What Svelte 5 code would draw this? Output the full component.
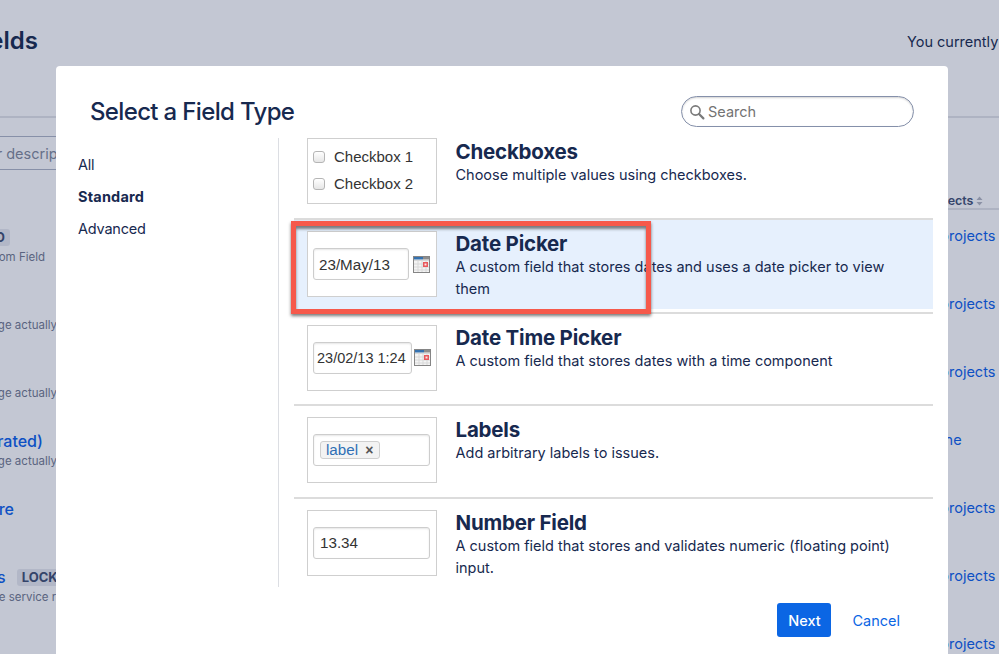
<script lang="ts">
  const LEFT_ROWS = [
    { cls: 'r0', title: '', tag: 'LOCKED', desc: 'Default Custom Field' },
    { cls: 'r1', title: '', tag: '', desc: 'This page actually' },
    { cls: 'r2', title: '', tag: '', desc: 'This page actually' },
    { cls: 'r3', title: 'Epic (migrated)', tag: '', desc: 'This page actually' },
    { cls: 'r4', title: 'Store', tag: '', desc: '' },
    { cls: 'r5', title: 'Participants', tag: 'LOCKED', desc: 'Used by the service request' },
  ];
  const RIGHT_ROWS = ['All projects', 'All projects', 'All projects', 'None', 'All projects', 'All projects', 'All projects'];
</script>

{#snippet calendar()}
  <svg class="cal" width="17" height="17" viewBox="0 0 17 17" aria-hidden="true">
    <rect x="0.5" y="0.5" width="16" height="16" fill="#f4f4f4" stroke="#858585" />
    <rect x="1" y="1" width="9" height="2.5" fill="#3572b0" />
    <rect x="10" y="1" width="6" height="2.5" fill="#8d8d8d" />
    <path d="M1 4.5h15M1 8h15M1 11h15M1 14h15M5 4v12M9 4v12M13 4v12" stroke="#d8d8d8" stroke-width="1" fill="none" />
    <rect x="10" y="6" width="5" height="5" fill="#e8585c" />
    <rect x="11.5" y="7.5" width="2" height="2" fill="#fbe4e4" />
  </svg>
{/snippet}

<div class="page">
  <div class="strip left">
    <div class="head"><h1>Custom fields</h1></div>
    <div class="filter"><span>Search by name or description</span></div>
    <div class="rows">
      {#each LEFT_ROWS as row}
        <div class="row {row.cls}">
          <div class="row-title">
            {#if row.title}<a href="#top">{row.title}</a>{/if}
            {#if row.tag}<span class="tag">{row.tag}</span>{/if}
          </div>
          <div class="row-desc">{row.desc}</div>
        </div>
      {/each}
    </div>
  </div>

  <div class="strip right">
    <div class="head"><span class="currently">You currently</span></div>
    <div class="col-head">
      <span>Projects</span>
      <svg width="7" height="10" viewBox="0 0 7 10" aria-hidden="true">
        <path d="M3.5 0.5 6.5 4H.5zM3.5 9.5 .5 6h6z" fill="#8b91a5" />
      </svg>
    </div>
    <div class="rows">
      {#each RIGHT_ROWS as label}
        <div class="row"><a href="#top">{label}</a></div>
      {/each}
    </div>
  </div>

  <div class="modal" role="dialog" aria-modal="true">
    <header class="modal-head">
      <h2>Select a Field Type</h2>
      <label class="search">
        <svg width="16" height="16" viewBox="0 0 16 16" aria-hidden="true">
          <circle cx="6.5" cy="6.5" r="4.6" fill="none" stroke="#7a7a7a" stroke-width="1.6" />
          <path d="M10 10l4.4 4.4" stroke="#7a7a7a" stroke-width="2.2" stroke-linecap="round" />
        </svg>
        <input type="text" placeholder="Search" />
      </label>
    </header>

    <div class="modal-body">
      <nav class="side">
        <div class="side-item">All</div>
        <div class="side-item on">Standard</div>
        <div class="side-item">Advanced</div>
      </nav>

      <div class="list">
        <div class="type first">
          <div class="thumb checks">
            <label><input type="checkbox" /> Checkbox 1</label>
            <label><input type="checkbox" /> Checkbox 2</label>
          </div>
          <div class="info">
            <h3>Checkboxes</h3>
            <p>Choose multiple values using checkboxes.</p>
          </div>
        </div>

        <div class="type selected">
          <div class="thumb">
            <input class="fake date" type="text" readonly value="23/May/13" />
            {@render calendar()}
          </div>
          <div class="info">
            <h3>Date Picker</h3>
            <p>A custom field that stores dates and uses a date picker to view them</p>
          </div>
        </div>

        <div class="type">
          <div class="thumb">
            <input class="fake datetime" type="text" readonly value="23/02/13 1:24" />
            {@render calendar()}
          </div>
          <div class="info">
            <h3>Date Time Picker</h3>
            <p>A custom field that stores dates with a time component</p>
          </div>
        </div>

        <div class="type">
          <div class="thumb">
            <div class="fake wide labels">
              <span class="chip">label <b>×</b></span>
            </div>
          </div>
          <div class="info">
            <h3>Labels</h3>
            <p>Add arbitrary labels to issues.</p>
          </div>
        </div>

        <div class="type last">
          <div class="thumb">
            <input class="fake wide" type="text" readonly value="13.34" />
          </div>
          <div class="info">
            <h3>Number Field</h3>
            <p>A custom field that stores and validates numeric (floating point) input.</p>
          </div>
        </div>
      </div>

      <div class="callout"></div>
    </div>

    <footer class="modal-foot">
      <button class="next" type="button">Next</button>
      <button class="cancel" type="button">Cancel</button>
    </footer>
  </div>
</div>

<style>
  :global(body) {
    margin: 0;
    font-family: Inter, "Liberation Sans", sans-serif;
  }

  .page {
    position: relative;
    height: 654px;
    overflow: hidden;
    background: #c3c7d3;
    display: flex;
    justify-content: space-between;
    color: #17294f;
  }

  /* background table, only the edges show past the dialog */
  .strip {
    overflow: hidden;
    display: flex;
    flex-direction: column;
  }
  .strip.left { width: 56px; }
  .strip.right { width: 92px; }

  .head {
    height: 116px;
    border-bottom: 2px solid #aeb3c2;
    display: flex;
    flex-shrink: 0;
  }
  .left .head { justify-content: flex-end; padding-right: 18px; }
  h1 {
    margin: 25px 0 0;
    font-size: 24px;
    line-height: 32px;
    font-weight: 600;
    white-space: nowrap;
    flex-shrink: 0;
  }
  .currently {
    margin: 33px 0 0;
    font-size: 14.5px;
    line-height: 18px;
    white-space: nowrap;
  }

  .filter {
    margin-top: 18px;
    height: 32px;
    border-top: 1px solid #8790a8;
    border-bottom: 1px solid #8790a8;
    display: flex;
    align-items: center;
    white-space: nowrap;
    color: #667089;
    font-size: 14.5px;
  }
  .filter span { margin-left: -127px; }

  .col-head {
    margin-top: 75px;
    height: 20px;
    border-bottom: 2px solid #aeb3c2;
    display: flex;
    align-items: center;
    gap: 3px;
    font-size: 12.5px;
    font-weight: 600;
    white-space: nowrap;
    color: #35456b;
  }
  .col-head span { margin-left: 17px; }

  .left .rows { margin-top: 42px; }
  .strip .rows { display: flex; flex-direction: column; }
  .right .rows .row {
    height: 68px;
    flex-shrink: 0;
    white-space: nowrap;
    font-size: 14.5px;
    line-height: 18px;
    padding-top: 17px;
    box-sizing: border-box;
  }
  .right .rows a { margin-left: 12px; display: inline-block; }
  .right .rows .row:nth-child(4) a { margin-left: 18px; }

  a { color: #0d50c4; text-decoration: none; }

  .left .row {
    height: 68px;
    flex-shrink: 0;
    box-sizing: border-box;
    padding-top: 16px;
    display: flex;
    flex-direction: column;
    align-items: flex-end;
    white-space: nowrap;
    width: 56px;
  }
  .row-title {
    height: 18px;
    display: flex;
    align-items: center;
    gap: 11px;
    font-size: 16px;
    font-weight: 500;
    flex-shrink: 0;
  }
  .row-desc {
    margin-top: 3px;
    font-size: 11.5px;
    line-height: 16px;
    color: #5a6480;
    flex-shrink: 0;
  }
  .tag {
    background: #b2b7c7;
    color: #34446a;
    border-radius: 3px;
    font-size: 13px;
    font-weight: 700;
    line-height: 17px;
    padding: 0 5px;
  }
  .r0 .row-title { margin-right: 46px; }
  .r0 .row-desc { margin-right: 11px; }
  .r1 .row-desc, .r2 .row-desc, .r3 .row-desc { margin-right: -1px; }
  .r3 .row-title { margin-right: 13px; }
  .r4 .row-title { margin-right: 42px; }
  .r5 .row-title { margin-right: -24px; }
  .r5 .row-desc { margin-right: -37px; }

  /* dialog */
  .modal {
    position: absolute;
    left: 56px;
    top: 66px;
    width: 892px;
    height: 600px;
    background: #fff;
    border-radius: 4px;
    display: flex;
    flex-direction: column;
  }
  .modal-head {
    height: 72px;
    box-sizing: border-box;
    padding: 30px 34px 0;
    display: flex;
    justify-content: space-between;
    align-items: flex-start;
  }
  h2 {
    margin: 0;
    font-size: 24px;
    line-height: 32px;
    font-weight: 500;
    letter-spacing: -0.65px;
    color: #17294f;
  }
  .search {
    width: 233px;
    height: 31px;
    box-sizing: border-box;
    border: 1px solid #8590aa;
    border-radius: 16px;
    box-shadow: inset 0 1px 2px rgba(0, 0, 0, 0.18);
    display: flex;
    align-items: center;
    gap: 3px;
    padding-left: 7px;
  }
  .search input {
    border: 0;
    outline: 0;
    background: none;
    padding: 0;
    width: 190px;
    font: 14.5px Inter, sans-serif;
  }
  .search input::placeholder { color: #737373; opacity: 1; }

  .modal-body {
    position: relative;
    height: 449px;
    display: flex;
  }
  .side {
    width: 200px;
    padding: 11px 0 0 22px;
    border-right: 1px solid #dcdee3;
    flex-shrink: 0;
  }
  .side-item {
    height: 32px;
    line-height: 32px;
    font-size: 14.5px;
    letter-spacing: -0.2px;
  }
  .side-item.on { font-weight: 700; letter-spacing: 0.2px; }

  .list {
    margin-left: 15px;
    width: 639px;
    overflow: hidden;
    color: #17294f;
  }
  .type {
    height: 92.5px;
    box-sizing: border-box;
    padding: 11px 13px 0;
    border-bottom: 2px solid #dcdcdc;
    display: flex;
    gap: 18.5px;
  }
  .type.first { height: 82px; padding-top: 0; }
  .type.last { border-bottom: 0; }
  .type.selected {
    height: 93.5px;
    background: linear-gradient(#e6f0fd 89px, #fff 89px);
  }
  .thumb {
    width: 130px;
    height: 66px;
    box-sizing: border-box;
    flex-shrink: 0;
    border: 1px solid #cfcfcf;
    background: #fff;
    display: flex;
    align-items: center;
    padding-left: 5px;
    gap: 4px;
  }
  .checks {
    flex-direction: column;
    align-items: flex-start;
    justify-content: center;
    gap: 8px;
    padding-bottom: 2px;
    font: 15px "Liberation Sans", Arial, sans-serif;
    color: #333;
  }
  .checks label { display: flex; align-items: center; gap: 9px; height: 19px; }
  .checks input {
    appearance: none;
    width: 12px;
    height: 12px;
    margin: 0;
    border: 1px solid #b5b5b5;
    border-radius: 3px;
    background: linear-gradient(#fff, #e6e6e6);
  }
  .fake {
    box-sizing: border-box;
    height: 32px;
    border: 1px solid #cdcdcd;
    border-radius: 3px;
    box-shadow: inset 0 1px 2px rgba(0, 0, 0, 0.1);
    background: #fff;
    padding: 0 5px;
    outline: 0;
    color: #333;
    font: 15.2px "Liberation Sans", Arial, sans-serif;
  }
  .fake.date { width: 96px; }
  .fake.datetime { width: 99px; padding: 0 3px; font-size: 14.5px; }
  .fake.wide { width: 117px; padding: 0 6px; }
  .cal { flex-shrink: 0; }
  .datetime + .cal { margin-left: -2px; }
  .labels { display: flex; align-items: center; padding-left: 8px; }
  .chip {
    height: 18px;
    box-sizing: border-box;
    width: 60px;
    border: 1px solid #cfcfcf;
    border-radius: 3px;
    background: #f3f3f3;
    color: #2f6fb5;
    padding-left: 5px;
    line-height: 16px;
    white-space: nowrap;
  }
  .chip b { color: #555; margin-left: 3px; font-size: 14px; }

  .info h3 {
    margin: 0;
    font-size: 20.5px;
    line-height: 26px;
    font-weight: 700;
    letter-spacing: -0.2px;
  }
  .type.first h3 { margin-top: 1px; }
  .info p {
    margin: -1px 0 0;
    font-size: 14.5px;
    line-height: 22px;
  }

  /* screenshot annotation */
  .callout {
    position: absolute;
    left: 235px;
    top: 83px;
    width: 360px;
    height: 93px;
    box-sizing: border-box;
    border: 5px solid #f6594b;
    box-shadow: 0 2px 3px rgba(30, 30, 30, 0.6), inset 0 3px 3px rgba(30, 30, 30, 0.55);
    pointer-events: none;
  }

  .modal-foot {
    margin-top: 16px;
    padding-right: 48px;
    display: flex;
    justify-content: flex-end;
    align-items: center;
    gap: 21px;
  }
  .modal-foot button {
    font: 500 14.5px Inter, sans-serif;
    border: 0;
    height: 34px;
    border-radius: 3px;
    padding: 1px 0 0;
    cursor: pointer;
  }
  .next { width: 54px; background: #0b66e4; color: #fff; }
  .cancel { background: none; color: #0b66e4; font-weight: 400 !important; }
</style>
